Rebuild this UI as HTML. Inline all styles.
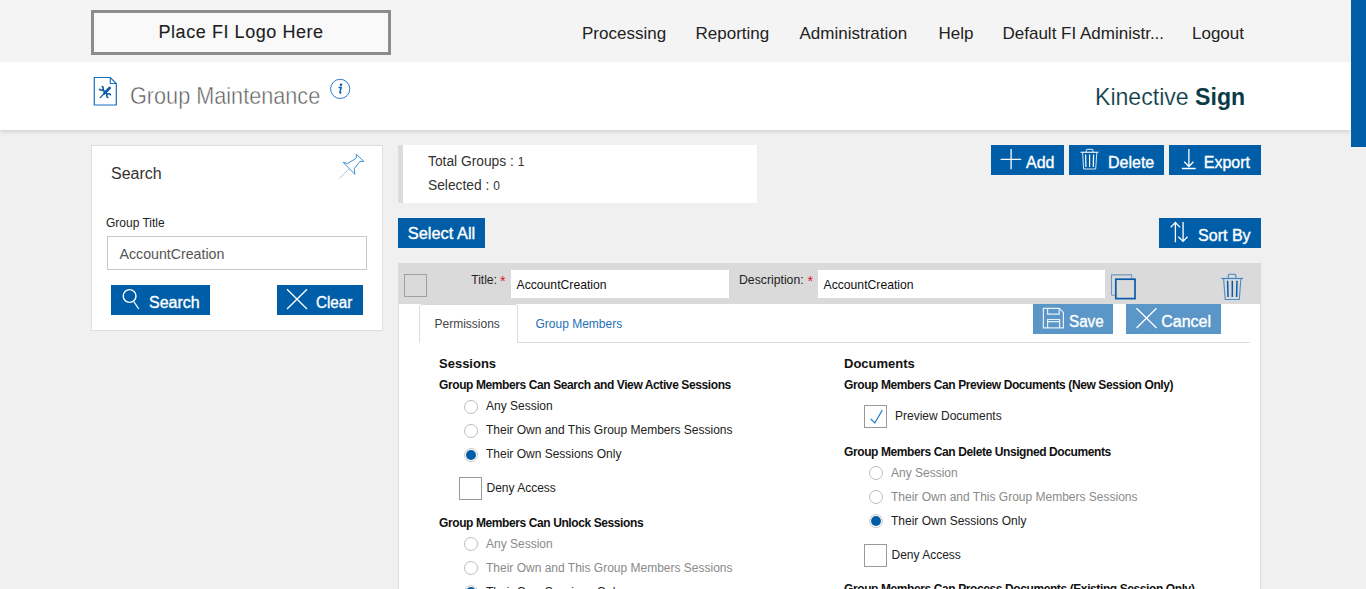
<!DOCTYPE html>
<html><head><meta charset="utf-8"><title>Group Maintenance</title>
<style>
html,body{margin:0;padding:0;}
body{width:1366px;height:589px;overflow:hidden;position:relative;background:#f0f0f0;font-family:"Liberation Sans", sans-serif;}
svg{position:absolute;overflow:visible}
</style></head><body>
<div style="position:absolute;left:0px;top:0px;width:1351px;height:62px;background:#f4f4f4"></div>
<div style="position:absolute;left:91px;top:10px;width:300px;height:45px;border:3px solid #8c8c8c;box-sizing:border-box;background:#f9f9f9"></div>
<div style="position:absolute;left:158.5px;top:22.76px;font-size:18px;line-height:18px;color:#1e1e1e;font-weight:400;white-space:nowrap;-webkit-text-stroke:0.12px #1e1e1e;letter-spacing:0.56px">Place FI Logo Here</div>
<div style="position:absolute;left:582px;top:24.61px;font-size:17px;line-height:17px;color:#222;font-weight:400;white-space:nowrap;">Processing</div>
<div style="position:absolute;left:695.5px;top:24.61px;font-size:17px;line-height:17px;color:#222;font-weight:400;white-space:nowrap;">Reporting</div>
<div style="position:absolute;left:799.5px;top:24.61px;font-size:17px;line-height:17px;color:#222;font-weight:400;white-space:nowrap;">Administration</div>
<div style="position:absolute;left:938.5px;top:24.61px;font-size:17px;line-height:17px;color:#222;font-weight:400;white-space:nowrap;">Help</div>
<div style="position:absolute;left:1002.5px;top:24.61px;font-size:17px;line-height:17px;color:#222;font-weight:400;white-space:nowrap;">Default FI Administr...</div>
<div style="position:absolute;left:1192px;top:24.61px;font-size:17px;line-height:17px;color:#222;font-weight:400;white-space:nowrap;">Logout</div>
<div style="position:absolute;left:0px;top:62px;width:1351px;height:68px;background:#fff;box-shadow:0 2px 4px rgba(0,0,0,0.12)"></div>
<div style="position:absolute;left:129.8px;top:83.85px;font-size:23.8px;line-height:23.8px;color:#5a5a5a;font-weight:400;white-space:nowrap;transform:scaleX(0.91);transform-origin:0 0;-webkit-text-stroke:0.5px #fff;">Group Maintenance</div>
<div style="position:absolute;left:1094.8px;top:84.68px;font-size:24px;line-height:24px;color:#0b3b47;font-weight:400;white-space:nowrap;transform:scaleX(0.962);transform-origin:0 0;"><span style="-webkit-text-stroke:0.2px #fff">Kinective</span> <b style="font-weight:700">Sign</b></div>
<div style="position:absolute;left:1351px;top:0px;width:15px;height:147px;background:#005ea8"></div>
<div style="position:absolute;left:91px;top:145px;width:292px;height:186px;background:#fff;border:1px solid #dedede;box-sizing:border-box"></div>
<div style="position:absolute;left:111px;top:166.46px;font-size:16px;line-height:16px;color:#333;font-weight:400;white-space:nowrap;">Search</div>
<div style="position:absolute;left:106px;top:217.04px;font-size:12px;line-height:12px;color:#222;font-weight:400;white-space:nowrap;">Group Title</div>
<div style="position:absolute;left:107px;top:236px;width:260px;height:34px;border:1px solid #c8c8c8;box-sizing:border-box;background:#fff"></div>
<div style="position:absolute;left:119.5px;top:247.48px;font-size:14.2px;line-height:14.2px;color:#555;font-weight:400;white-space:nowrap;">AccountCreation</div>
<div style="position:absolute;left:111px;top:285px;width:99px;height:30px;background:#005ea8"></div>
<div style="position:absolute;left:149px;top:294.86px;font-size:16px;line-height:16px;color:#fff;font-weight:400;white-space:nowrap;-webkit-text-stroke:0.35px #fff">Search</div>
<div style="position:absolute;left:277px;top:285px;width:86px;height:30px;background:#005ea8"></div>
<div style="position:absolute;left:316.3px;top:294.86px;font-size:16px;line-height:16px;color:#fff;font-weight:400;white-space:nowrap;transform:scaleX(0.95);transform-origin:0 0;-webkit-text-stroke:0.35px #fff">Clear</div>
<div style="position:absolute;left:398px;top:145px;width:359px;height:58px;background:#fff;border-left:5px solid #dcdcdc;box-sizing:border-box"></div>
<div style="position:absolute;left:428.3px;top:153.65px;font-size:14px;line-height:14px;color:#333;font-weight:400;white-space:nowrap;transform:scaleX(0.985);transform-origin:0 0;">Total Groups : <span style="font-size:12.2px">1</span></div>
<div style="position:absolute;left:428.3px;top:177.75px;font-size:14px;line-height:14px;color:#333;font-weight:400;white-space:nowrap;transform:scaleX(0.985);transform-origin:0 0;">Selected : <span style="font-size:12.2px">0</span></div>
<div style="position:absolute;left:991px;top:145px;width:73px;height:30px;background:#005ea8"></div>
<div style="position:absolute;left:1069px;top:145px;width:95px;height:30px;background:#005ea8"></div>
<div style="position:absolute;left:1169px;top:145px;width:92px;height:30px;background:#005ea8"></div>
<div style="position:absolute;left:1026px;top:154.96px;font-size:16px;line-height:16px;color:#fff;font-weight:400;white-space:nowrap;-webkit-text-stroke:0.35px #fff">Add</div>
<div style="position:absolute;left:1108px;top:154.96px;font-size:16px;line-height:16px;color:#fff;font-weight:400;white-space:nowrap;-webkit-text-stroke:0.35px #fff">Delete</div>
<div style="position:absolute;left:1203.8px;top:154.96px;font-size:16px;line-height:16px;color:#fff;font-weight:400;white-space:nowrap;-webkit-text-stroke:0.35px #fff">Export</div>
<div style="position:absolute;left:398px;top:218px;width:87px;height:30px;background:#005ea8"></div>
<div style="position:absolute;left:407.8px;top:224.72px;font-size:16.4px;line-height:16.4px;color:#fff;font-weight:400;white-space:nowrap;-webkit-text-stroke:0.35px #fff">Select All</div>
<div style="position:absolute;left:1159px;top:218px;width:102px;height:30px;background:#005ea8"></div>
<div style="position:absolute;left:1198.1px;top:227.76px;font-size:16px;line-height:16px;color:#fff;font-weight:400;white-space:nowrap;-webkit-text-stroke:0.35px #fff">Sort By</div>
<div style="position:absolute;left:398px;top:263px;width:863px;height:326px;background:#fff;border-left:1px solid #dcdcdc;border-right:1px solid #dcdcdc;box-sizing:border-box"></div>
<div style="position:absolute;left:398px;top:263px;width:863px;height:41px;background:#dadada"></div>
<div style="position:absolute;left:404px;top:274px;width:23px;height:23px;border:1px solid #a0a0a0;box-sizing:border-box"></div>
<div style="position:absolute;left:471.3px;top:273.84px;font-size:12px;line-height:12px;color:#222;font-weight:400;white-space:nowrap;">Title:</div>
<div style="position:absolute;left:500px;top:273.63px;font-size:14.5px;line-height:14.5px;color:#e8141b;font-weight:400;white-space:nowrap;">*</div>
<div style="position:absolute;left:511px;top:270px;width:218px;height:28px;background:#fff"></div>
<div style="position:absolute;left:516.5px;top:278.67px;font-size:12.2px;line-height:12.2px;color:#111;font-weight:400;white-space:nowrap;">AccountCreation</div>
<div style="position:absolute;left:739.3px;top:273.84px;font-size:12px;line-height:12px;color:#222;font-weight:400;white-space:nowrap;transform:scaleX(1.02);transform-origin:0 0;">Description:</div>
<div style="position:absolute;left:807.5px;top:273.63px;font-size:14.5px;line-height:14.5px;color:#e8141b;font-weight:400;white-space:nowrap;">*</div>
<div style="position:absolute;left:818px;top:270px;width:287px;height:28px;background:#fff"></div>
<div style="position:absolute;left:823.5px;top:278.67px;font-size:12.2px;line-height:12.2px;color:#111;font-weight:400;white-space:nowrap;">AccountCreation</div>
<div style="position:absolute;left:419px;top:342px;width:831px;height:1px;background:#dcdcdc"></div>
<div style="position:absolute;left:419px;top:304px;width:99px;height:39px;border:1px solid #dcdcdc;border-bottom:1px solid #fff;border-top:1px solid #d8d8d8;border-radius:4px 4px 0 0;box-sizing:border-box;background:#fff"></div>
<div style="position:absolute;left:434.5px;top:317.84px;font-size:12px;line-height:12px;color:#444;font-weight:400;white-space:nowrap;">Permissions</div>
<div style="position:absolute;left:535.5px;top:317.84px;font-size:12px;line-height:12px;color:#1f6fb5;font-weight:400;white-space:nowrap;">Group Members</div>
<div style="position:absolute;left:1033px;top:304px;width:80px;height:30px;background:#5a96c8"></div>
<div style="position:absolute;left:1068.6px;top:314.26px;font-size:16px;line-height:16px;color:#fff;font-weight:400;white-space:nowrap;transform:scaleX(0.95);transform-origin:0 0;-webkit-text-stroke:0.35px #fff">Save</div>
<div style="position:absolute;left:1126px;top:304px;width:95px;height:30px;background:#5a96c8"></div>
<div style="position:absolute;left:1161.2px;top:314.06px;font-size:16px;line-height:16px;color:#fff;font-weight:400;white-space:nowrap;-webkit-text-stroke:0.35px #fff">Cancel</div>
<div style="position:absolute;left:439px;top:357.00px;font-size:13px;line-height:13px;color:#111;font-weight:700;white-space:nowrap;">Sessions</div>
<div style="position:absolute;left:439px;top:378.84px;font-size:12px;line-height:12px;color:#111;font-weight:700;white-space:nowrap;letter-spacing:-0.4px">Group Members Can Search and View Active Sessions</div>
<div style="position:absolute;left:464px;top:400px;width:14px;height:14px;border-radius:50%;border:1px solid #bdbdbd;box-sizing:border-box;background:#fff"></div>
<div style="position:absolute;left:486px;top:399.84px;font-size:12px;line-height:12px;color:#222;font-weight:400;white-space:nowrap;">Any Session</div>
<div style="position:absolute;left:464px;top:424px;width:14px;height:14px;border-radius:50%;border:1px solid #bdbdbd;box-sizing:border-box;background:#fff"></div>
<div style="position:absolute;left:486px;top:423.84px;font-size:12px;line-height:12px;color:#222;font-weight:400;white-space:nowrap;">Their Own and This Group Members Sessions</div>
<div style="position:absolute;left:464px;top:448px;width:14px;height:14px;border-radius:50%;border:1px solid #c8c8c8;box-sizing:border-box;background:#fff"><div style="position:absolute;left:1px;top:1px;width:10px;height:10px;border-radius:50%;background:#005ea8"></div></div>
<div style="position:absolute;left:486px;top:447.84px;font-size:12px;line-height:12px;color:#222;font-weight:400;white-space:nowrap;">Their Own Sessions Only</div>
<div style="position:absolute;left:459px;top:477px;width:23px;height:23px;border:1px solid #9a9a9a;box-sizing:border-box;background:#fff"></div>
<div style="position:absolute;left:486.5px;top:481.84px;font-size:12px;line-height:12px;color:#222;font-weight:400;white-space:nowrap;">Deny Access</div>
<div style="position:absolute;left:439px;top:516.84px;font-size:12px;line-height:12px;color:#111;font-weight:700;white-space:nowrap;letter-spacing:-0.4px">Group Members Can Unlock Sessions</div>
<div style="position:absolute;left:464px;top:537px;width:14px;height:14px;border-radius:50%;border:1px solid #bdbdbd;box-sizing:border-box;background:#fff"></div>
<div style="position:absolute;left:486px;top:537.84px;font-size:12px;line-height:12px;color:#8a8a8a;font-weight:400;white-space:nowrap;">Any Session</div>
<div style="position:absolute;left:464px;top:561px;width:14px;height:14px;border-radius:50%;border:1px solid #bdbdbd;box-sizing:border-box;background:#fff"></div>
<div style="position:absolute;left:486px;top:561.84px;font-size:12px;line-height:12px;color:#8a8a8a;font-weight:400;white-space:nowrap;">Their Own and This Group Members Sessions</div>
<div style="position:absolute;left:464px;top:585px;width:14px;height:14px;border-radius:50%;border:1px solid #c8c8c8;box-sizing:border-box;background:#fff"><div style="position:absolute;left:1px;top:1px;width:10px;height:10px;border-radius:50%;background:#005ea8"></div></div>
<div style="position:absolute;left:486px;top:585.84px;font-size:12px;line-height:12px;color:#222;font-weight:400;white-space:nowrap;">Their Own Sessions Only</div>
<div style="position:absolute;left:844px;top:357.00px;font-size:13px;line-height:13px;color:#111;font-weight:700;white-space:nowrap;">Documents</div>
<div style="position:absolute;left:844px;top:379.14px;font-size:12px;line-height:12px;color:#111;font-weight:700;white-space:nowrap;letter-spacing:-0.4px">Group Members Can Preview Documents (New Session Only)</div>
<div style="position:absolute;left:864px;top:405px;width:23px;height:23px;border:1px solid #9a9a9a;box-sizing:border-box;background:#fff"></div>
<div style="position:absolute;left:895px;top:410.24px;font-size:12px;line-height:12px;color:#222;font-weight:400;white-space:nowrap;">Preview Documents</div>
<div style="position:absolute;left:844px;top:445.84px;font-size:12px;line-height:12px;color:#111;font-weight:700;white-space:nowrap;letter-spacing:-0.4px">Group Members Can Delete Unsigned Documents</div>
<div style="position:absolute;left:869px;top:466px;width:14px;height:14px;border-radius:50%;border:1px solid #bdbdbd;box-sizing:border-box;background:#fff"></div>
<div style="position:absolute;left:891px;top:467.04px;font-size:12px;line-height:12px;color:#8a8a8a;font-weight:400;white-space:nowrap;">Any Session</div>
<div style="position:absolute;left:869px;top:490px;width:14px;height:14px;border-radius:50%;border:1px solid #bdbdbd;box-sizing:border-box;background:#fff"></div>
<div style="position:absolute;left:891px;top:491.04px;font-size:12px;line-height:12px;color:#8a8a8a;font-weight:400;white-space:nowrap;">Their Own and This Group Members Sessions</div>
<div style="position:absolute;left:869px;top:514px;width:14px;height:14px;border-radius:50%;border:1px solid #c8c8c8;box-sizing:border-box;background:#fff"><div style="position:absolute;left:1px;top:1px;width:10px;height:10px;border-radius:50%;background:#005ea8"></div></div>
<div style="position:absolute;left:891px;top:515.04px;font-size:12px;line-height:12px;color:#222;font-weight:400;white-space:nowrap;">Their Own Sessions Only</div>
<div style="position:absolute;left:864px;top:544px;width:23px;height:23px;border:1px solid #9a9a9a;box-sizing:border-box;background:#fff"></div>
<div style="position:absolute;left:891.5px;top:548.84px;font-size:12px;line-height:12px;color:#222;font-weight:400;white-space:nowrap;">Deny Access</div>
<div style="position:absolute;left:844px;top:582.84px;font-size:12px;line-height:12px;color:#111;font-weight:700;white-space:nowrap;letter-spacing:-0.4px">Group Members Can Process Documents (Existing Session Only)</div>
<svg width="1366" height="589" style="left:0;top:0;position:absolute"><path d="M94.3,77.5 H110.3 L116.3,83.5 V105 H94.3 Z" fill="#fff" stroke="#1a6fc0" stroke-width="1.2"/><path d="M110.3,77.5 V83.5 H116.3" fill="none" stroke="#1a6fc0" stroke-width="1.1"/><path d="M102.6,89.6 L107.4,94.4" stroke="#0a5aa8" stroke-width="1.9"/><path d="M101.65,86.33 A2.0,2.0 0 1 1 99.33,88.65 M108.35,97.67 A2.0,2.0 0 1 1 110.67,95.35" fill="none" stroke="#0a5aa8" stroke-width="1.6"/><path d="M100.2,97.6 L104.2,93.6" stroke="#0a5aa8" stroke-width="1.3" stroke-linecap="round"/><path d="M104.4,93.4 L109.6,88.0" stroke="#0a5aa8" stroke-width="2.7" stroke-linecap="round"/><circle cx="340.2" cy="88.9" r="9.6" fill="none" stroke="#2a7cc8" stroke-width="1"/><circle cx="341" cy="84.8" r="1.3" fill="#0a5aa8"/><path d="M338.6,87.6 L341.2,87.4 L339.9,92.4 Q339.7,93.3 341.4,92.6" fill="none" stroke="#0a5aa8" stroke-width="1.5" stroke-linejoin="round"/><path d="M356.4,154.3 L363.8,161.4 L359.9,161.4 L354.2,168.8 L354.9,174.3 L343.2,162.4 L347.5,163.6 L356.2,158.2 Z" fill="#fff" stroke="#2a84cc" stroke-width="0.9" stroke-linejoin="round"/><path d="M349,169 L339.2,178.6" stroke="#6aa4d8" stroke-width="0.8" opacity="0.7"/><circle cx="129.6" cy="296" r="6.4" fill="none" stroke="#ffffff" stroke-width="1.4"/><path d="M133.8,301.6 L138.7,308.9" stroke="#ffffff" stroke-width="1.1"/><path d="M287,289.2 L307,309 M307,289.2 L287,309" stroke="#ffffff" stroke-width="1.3"/><path d="M1000.6,159.3 H1021.2 M1011.1,149 V169.2" stroke="#ffffff" stroke-width="1.3"/><path d="M1086.3,152.2 V150.3 Q1086.3,149.3 1087.3,149.3 H1092 Q1093,149.3 1093,150.3 V152.2" fill="none" stroke="#ffffff" stroke-width="1" opacity="0.9"/><path d="M1080.6,152.3 H1098.4" stroke="#ffffff" stroke-width="1.2" opacity="0.9"/><path d="M1082.6,152.5 L1083.6,169 H1095.7 L1096.8,152.5" fill="none" stroke="#ffffff" stroke-width="1" opacity="0.85"/><path d="M1085.6,154.5 L1085.9,167 M1089.6,154.5 V167 M1093.6,154.5 L1093.3,167" stroke="#ffffff" stroke-width="1.2"/><path d="M1188.9,149 V166.4 M1184.3,161.8 L1188.9,166.5 L1193.4,161.8 M1181.9,168.5 H1195.7" fill="none" stroke="#ffffff" stroke-width="1.3"/><path d="M1175.4,222.5 V242.2 M1170.6,227.4 L1175.4,222.5 L1180.1,227.4 M1183.1,222.1 V241.3 M1178.3,236.7 L1183.1,241.4 L1187.5,236.7" fill="none" stroke="#ffffff" stroke-width="1.3"/><path d="M1115,278.5 V275 Q1115,274.6 1115,274.6" fill="none"/><path d="M1115.2,295.2 H1112.2 Q1111.5,295.2 1111.5,294.5 V275.2 Q1111.5,274.6 1112.2,274.6 H1131.1 Q1131.7,274.6 1131.7,275.2 V278.5" fill="none" stroke="#6d98c4" stroke-width="1.1"/><path d="M1112,274.7 H1131.2" stroke="#8aa6c2" stroke-width="1.4"/><rect x="1115.8" y="279.2" width="19.2" height="19.4" fill="none" stroke="#0a5aa8" stroke-width="1.7"/><path d="M1228.3,278.3 V275.4 Q1228.3,274.3 1229.4,274.3 H1234.8 Q1235.9,274.3 1235.9,275.4 V278.3" fill="none" stroke="#3f86c8" stroke-width="1.1"/><path d="M1221.2,278.5 H1243" stroke="#3f86c8" stroke-width="1.2"/><path d="M1223.6,278.6 L1225.2,299.5 H1239.3 L1240.9,278.6" fill="none" stroke="#4a8cc8" stroke-width="1.1"/><path d="M1227.6,280.8 L1228,297 M1232.3,280.8 V297 M1237,280.8 L1236.6,297" stroke="#0a5aa8" stroke-width="1.5"/><path d="M1043.4,308.4 H1059.3 L1063.4,312.4 V327.8 H1043.4 Z" fill="none" stroke="#ffffff" stroke-width="1.2" opacity="0.85"/><path d="M1047.6,308.4 V314.2 H1059.2 V308.4 M1047.6,327.8 V319.5 H1059.6 V327.8 M1047.6,321.6 H1059.6" fill="none" stroke="#ffffff" stroke-width="1.2" opacity="0.85"/><path d="M1136.5,308.3 L1156.5,328 M1156.5,308.3 L1136.5,328" stroke="#ffffff" stroke-width="1.3"/><path d="M870.7,419 L874.9,422.9 L882.3,410.1" fill="none" stroke="#1f7ac4" stroke-width="1.1"/></svg>
</body></html>
